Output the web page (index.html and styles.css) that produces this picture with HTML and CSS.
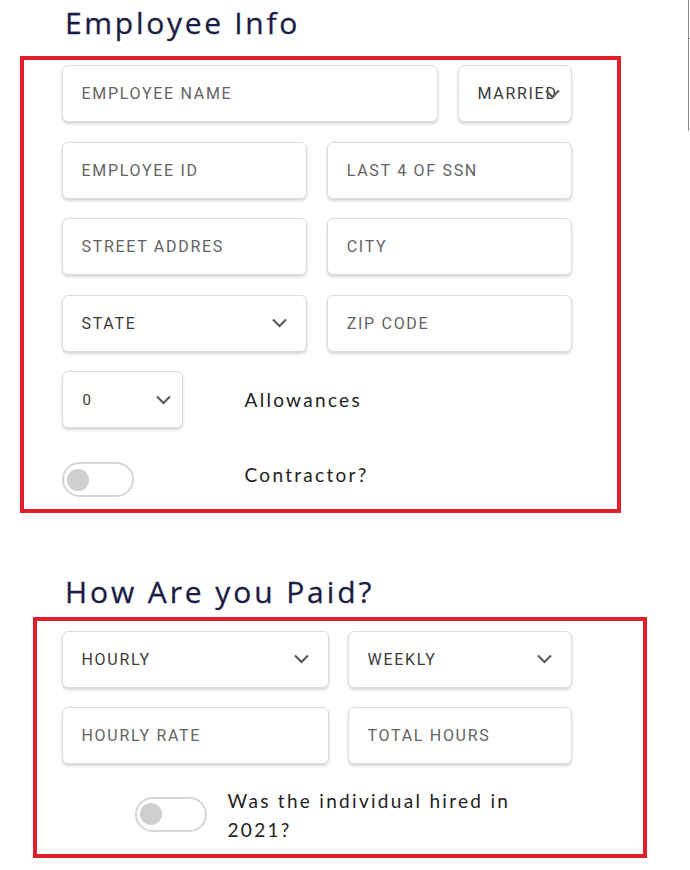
FILE: index.html
```html
<!DOCTYPE html>
<html>
<head>
<meta charset="utf-8">
<link rel="stylesheet" href="styles.css">
</head>
<body>
<div class="edge"></div>
<main class="page">
  <h2 class="heading">Employee Info</h2>
  <section class="box box-one">
    <div class="row row-name">
      <div class="field">Employee Name</div>
      <div class="field select select-married"><span class="val">MARRIED</span><svg class="chev chev-over" viewBox="0 0 16 10"><path d="M1.5 1.5 L8 8 L14.5 1.5"/></svg></div>
    </div>
    <div class="row row-half">
      <div class="field">Employee ID</div>
      <div class="field">Last 4 of SSN</div>
    </div>
    <div class="row row-half">
      <div class="field">Street Addres</div>
      <div class="field">City</div>
    </div>
    <div class="row row-half">
      <div class="field select"><span class="val">STATE</span><svg class="chev" viewBox="0 0 16 10"><path d="M1.5 1.5 L8 8 L14.5 1.5"/></svg></div>
      <div class="field">Zip Code</div>
    </div>
    <div class="row row-label">
      <div class="field select select-small"><span class="val val-num">0</span><svg class="chev" viewBox="0 0 16 10"><path d="M1.5 1.5 L8 8 L14.5 1.5"/></svg></div>
      <span class="label">Allowances</span>
    </div>
    <div class="row row-label row-toggle">
      <div class="toggle"><span class="knob"></span></div>
      <span class="label">Contractor?</span>
    </div>
  </section>

  <h2 class="heading heading-two">How Are you Paid?</h2>
  <section class="box box-two">
    <div class="row row-pay">
      <div class="field select"><span class="val">HOURLY</span><svg class="chev" viewBox="0 0 16 10"><path d="M1.5 1.5 L8 8 L14.5 1.5"/></svg></div>
      <div class="field select"><span class="val">WEEKLY</span><svg class="chev" viewBox="0 0 16 10"><path d="M1.5 1.5 L8 8 L14.5 1.5"/></svg></div>
    </div>
    <div class="row row-pay">
      <div class="field">Hourly Rate</div>
      <div class="field">Total Hours</div>
    </div>
    <div class="row row-hired">
      <div class="toggle"><span class="knob"></span></div>
      <span class="label label-wrap">Was the individual hired in 2021?</span>
    </div>
  </section>
</main>
</body>
</html>
```

FILE: styles.css
```css
* { box-sizing: border-box; }
html, body { margin: 0; padding: 0; background: #fff; }
body { width: 690px; height: 870px; overflow: hidden; position: relative; }

.edge {
  position: absolute;
  right: 0;
  top: 0;
  width: 2px;
  height: 131px;
  border-left: 1px solid #8a8a8a;
}
.edge::before {
  content: "";
  position: absolute;
  left: -1px;
  top: 38px;
  width: 3px;
  border-top: 1px solid #8a8a8a;
}

.heading {
  margin: 0;
  padding: 4px 0 0 65px;
  height: 56px;
  font-family: "Open Sans", sans-serif;
  font-weight: 500;
  font-size: 30px;
  line-height: 38px;
  letter-spacing: 2.7px;
  color: #1b1d45;
  -webkit-text-stroke: 0.3px #1b1d45;
}
.heading-two {
  margin-top: 43px;
  padding-top: 18px;
  height: 61px;
  line-height: 36px;
  letter-spacing: 2.9px;
}

.box {
  border: 4.5px solid #e21f2b;
}
.box-one {
  margin-left: 20px;
  width: 601px;
  height: 457px;
  padding: 5px 45px 0 37.5px;
}
.box-two {
  margin-left: 33px;
  width: 614px;
  height: 241px;
  padding: 9.5px 71.5px 0 24.5px;
}

.row { display: grid; column-gap: 20px; margin-bottom: 19.5px; }
.row-name { grid-template-columns: 376px 1fr; }
.row-half { grid-template-columns: 1fr 1fr; }
.row-pay { grid-template-columns: 267px 1fr; column-gap: 19px; margin-bottom: 19px; }
.row-label { grid-template-columns: 183px 1fr; column-gap: 0; align-items: center; }
.row-toggle { margin-top: 34px; }
.row-toggle .label { margin-top: -10px; }

.field {
  height: 57px;
  border: 1px solid #dcdcdc;
  border-radius: 6px;
  box-shadow: 0 2px 3px rgba(0,0,0,0.16);
  background: #fff;
  padding: 0 18px 0 19px;
  display: flex;
  align-items: center;
  font-family: Roboto, "Liberation Sans", sans-serif;
  font-size: 16px;
  letter-spacing: 1.7px;
  text-transform: uppercase;
  color: #646464;
}
.select { justify-content: space-between; }
.select .val { color: #3a3a3a; }
.select-married { padding-right: 10px; }
.select-small { width: 121px; padding-right: 10px; }
.val-num { font-size: 15px; letter-spacing: 0; padding-left: 1px; }

.chev {
  width: 17px;
  height: 10px;
  fill: none;
  stroke: #555;
  stroke-width: 2;
  flex: none;
}
.chev-over { margin-left: -16px; }

.label {
  font-family: Lato, "Open Sans", sans-serif;
  font-size: 19px;
  letter-spacing: 2.3px;
  color: #222;
}

.toggle {
  width: 72px;
  height: 35px;
  border: 2px solid #d6d6d6;
  border-radius: 18px;
  padding: 4.5px 0 0 3px;
  background: #fff;
}
.knob {
  display: block;
  width: 22px;
  height: 22px;
  border-radius: 50%;
  background: #cfcfcf;
}

.row-hired {
  grid-template-columns: 72px 1fr;
  column-gap: 21px;
  padding-left: 73px;
  margin-top: 15px;
  align-items: start;
}
.row-hired .toggle { margin-top: 14px; }
.label-wrap {
  width: 310px;
  letter-spacing: 2.3px;
  line-height: 29px;
  margin-top: 3px;
}
```
